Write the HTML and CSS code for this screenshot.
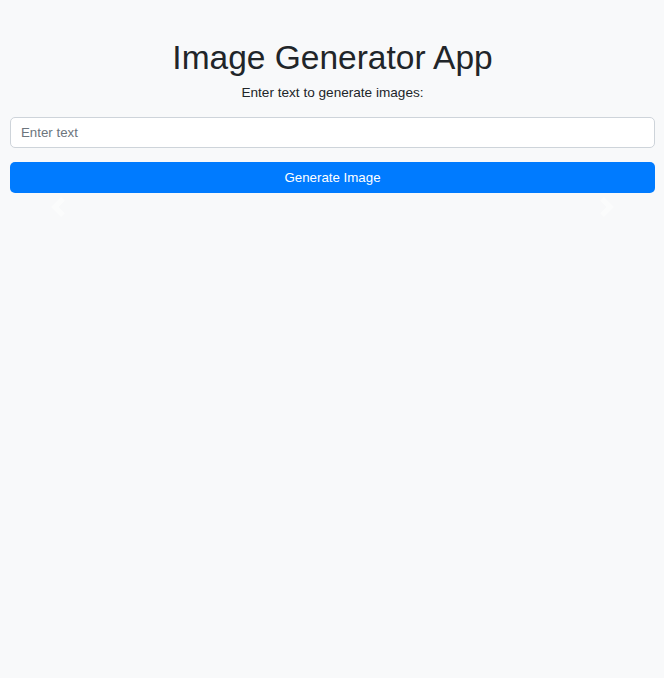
FILE: index.html
```html
<!DOCTYPE html>
<html lang="en">
<head>
<meta charset="utf-8">
<title>Image Generator App</title>
<link rel="stylesheet" href="styles.css">
</head>
<body>
<div class="container">
  <h1 class="title">Image Generator App</h1>
  <p class="subtitle">Enter text to generate images:</p>
  <input class="text-input" type="text" placeholder="Enter text">
  <button class="btn-generate" type="button">Generate Image</button>
  <div class="carousel">
    <a class="carousel-control prev" href="#" aria-label="Previous">
      <svg class="chev" viewBox="0 0 8 8" width="20" height="20"><path d="M5.25 0l-4 4 4 4 1.5-1.5L4.25 4l2.5-2.5L5.25 0z" fill="#fff"/></svg>
    </a>
    <a class="carousel-control next" href="#" aria-label="Next">
      <svg class="chev" viewBox="0 0 8 8" width="20" height="20"><path d="M2.75 0l-1.5 1.5L3.75 4l-2.5 2.5L2.75 8l4-4-4-4z" fill="#fff"/></svg>
    </a>
  </div>
</div>
</body>
</html>
```
FILE: styles.css
```css
html, body {
  margin: 0;
  padding: 0;
  background: #f8f9fa;
  font-family: "Liberation Sans", Arial, sans-serif;
  color: #212529;
}
.container {
  padding: 0 9px 0 10px;
  display: flex;
  flex-direction: column;
}
.title {
  margin: 36px 0 0;
  font-size: 33.5px;
  font-weight: 400;
  line-height: 43px;
  text-align: center;
}
.subtitle {
  margin: 4px 0 0;
  font-size: 13.6px;
  line-height: 20px;
  text-align: center;
}
.text-input {
  margin-top: 14px;
  height: 31px;
  box-sizing: border-box;
  border: 1px solid #ced4da;
  border-radius: 5px;
  background: #fff;
  padding: 0 10px;
  font-family: inherit;
  font-size: 13.3px;
  color: #495057;
}
.text-input::placeholder {
  color: #6c757d;
}
.btn-generate {
  margin-top: 14px;
  height: 31px;
  border: 0;
  border-radius: 5px;
  background: #007bff;
  color: #fff;
  font-family: inherit;
  font-size: 13.3px;
  cursor: pointer;
}
.carousel {
  position: relative;
  height: 27px;
}
.carousel-control {
  position: absolute;
  top: 0;
  bottom: 0;
  width: 15%;
  display: flex;
  align-items: center;
  justify-content: center;
  opacity: 0.5;
}
.carousel-control.prev { left: 0; }
.carousel-control.next { right: 0; }
```
